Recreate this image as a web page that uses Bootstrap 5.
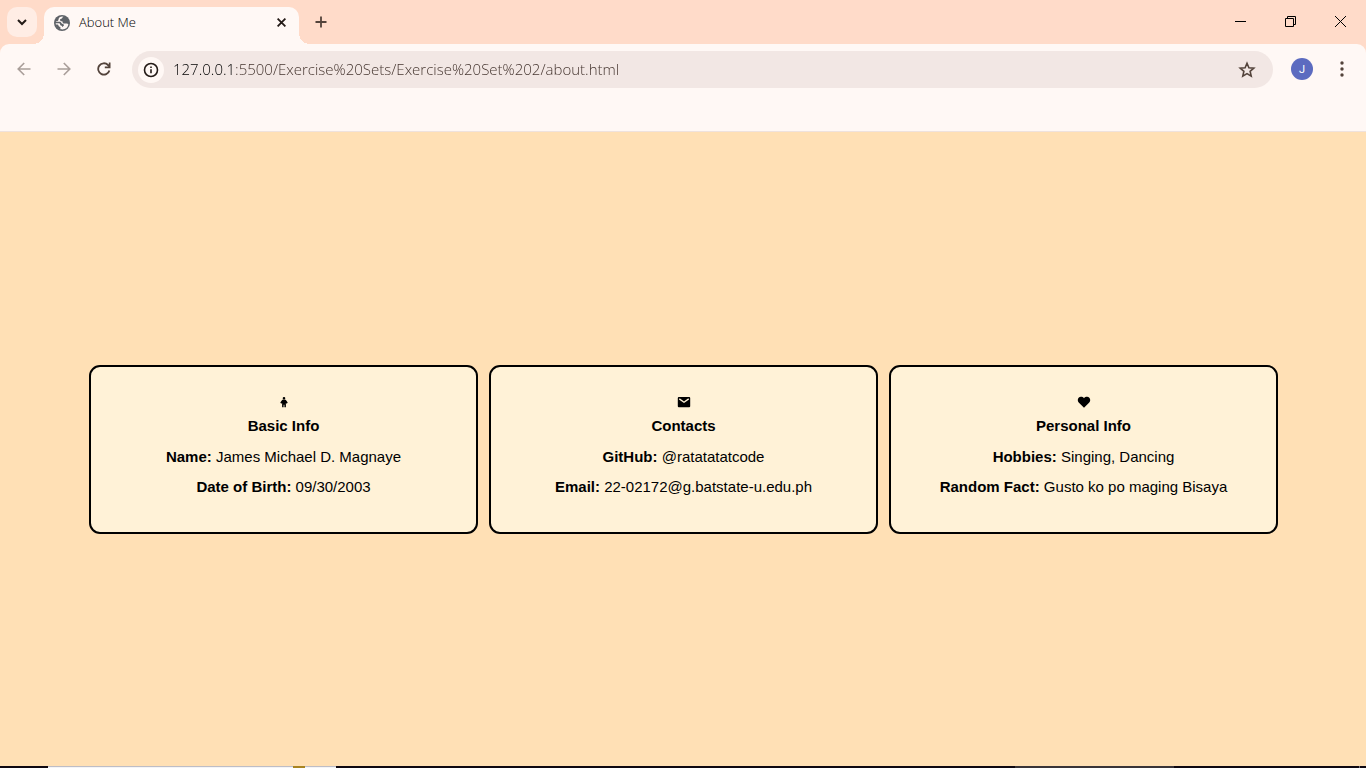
<!DOCTYPE html>
<html lang="en">
<head>
<meta charset="utf-8">
<meta name="viewport" content="width=device-width, initial-scale=1">
<title>About Me</title>
<link href="https://cdn.jsdelivr.net/npm/bootstrap@5.3.0/dist/css/bootstrap.min.css" rel="stylesheet">
<style>
  :root { --frame: #ffdbc9; --bar: #fff8f5; --ink: #231a16; --brown: #53433b; }
  body { background: #ffe0b5; font-family: "Open Sans", sans-serif; color: #000; }
  svg { display: block; }
  button { border: 0; background: none; padding: 0; }
  .tabstrip { background: var(--frame); height: 44px; padding: 7px 0 0 7px; }
  .tab-search { width: 30px; height: 30px; border-radius: 10px; background: #ffede5; margin-right: 7px; }
  .browser-tab { width: 255px; height: 37px; border-radius: 10px 10px 0 0; background: var(--bar); padding: 0 13px 6px 10px; font-size: 13px; font-weight: 300; }
  .browser-tab::before, .browser-tab::after { content: ""; position: absolute; bottom: 0; width: 11px; height: 11px; }
  .browser-tab::before { right: 100%; background: radial-gradient(circle at 0 0, transparent 11px, var(--bar) 11px); }
  .browser-tab::after { left: 100%; background: radial-gradient(circle at 100% 0, transparent 11px, var(--bar) 11px); }
  .tab-title { margin-left: 9px; }
  .new-tab { margin-left: 16px; height: 30px; }
  .win-btn { width: 50px; height: 29px; }
  .toolbar-wrap { background: var(--frame); }
  .toolbar { background: var(--bar); border-radius: 9px 9px 0 0; height: 88px; padding: 7px 14px 0 14px; border-bottom: 1px solid #efe2dd; }
  .nav-btn { width: 20px; height: 36px; }
  .nav-group { gap: 20px; }
  .omnibox { height: 37px; border-radius: 19px; background: #f2e7e4; padding: 0 17px 0 6px; margin-left: 18px; }
  .site-info { width: 26px; height: 26px; border-radius: 50%; background: var(--bar); }
  .url { border: 0; outline: 0; padding: 0; margin-left: 9px; font-size: 15px; font-weight: 300; color: transparent; background: linear-gradient(90deg, #000 59px, #40302a 59px); -webkit-background-clip: text; background-clip: text; }
  .avatar { width: 22px; height: 22px; border-radius: 50%; background: #5c6bc0; color: #fff; font: 11px Roboto, sans-serif; margin: 7px 0 0 18px; }
  .menu-btn { width: 20px; height: 36px; margin-left: 19px; }
  .page { padding: 0 88px 0 89px; font-family: "Liberation Sans", Arial, sans-serif; font-size: 15px; line-height: 20px; }
  .cards { gap: 11px; }
  .info-card { flex: 1 1 0; min-width: 0; min-height: 169px; border: 2px solid #000; border-radius: 11px; background: #fff2d7; padding: 28px 10px 20px; }
  .info-card h2 { font-size: 15px; font-weight: 700; line-height: 20px; margin: 7px 0 11px; }
  .info-card p { margin: 0 0 10px; }
  .taskbar { height: 2px; background: #0e0811; }
  .task-search { width: 288px; margin-left: 48px; background: #f4f4f6; border-top: 1px solid #bdbdc6; }
  .task-dot { width: 12px; height: 2px; background: #a88420; margin: -1px 0 0 245px; }
  .task-active { width: 159px; background: #393438; margin-right: 185px; }
  .task-edge { width: 1px; background: #77727a; margin-right: 6px; }
</style>
</head>
<body class="d-flex flex-column min-vh-100">
<header>
  <div class="tabstrip d-flex">
    <button class="tab-search d-flex align-items-center justify-content-center" aria-label="Search tabs">
      <svg width="10" height="8" viewBox="0 0 10 8" fill="none" stroke="#231a16" stroke-width="2"><path d="M1 2l4 4 4-4"/></svg>
    </button>
    <div class="browser-tab position-relative d-flex align-items-center">
      <svg width="16" height="16" viewBox="0 0 16 16"><circle cx="8" cy="8" r="8" fill="#5f6368"/><path fill="#fff8f5" d="M9.600 1.800C8.300 2.200 8.600 3 7.800 3.500 7.200 3.900 6 3.900 6 4.800s.5 1.500 1.500 1.500c.9 0 1.200.3 1.200 1.200 0 .7.600 1.100 1.300 1.100h2.700c.8 0 1.300.4 1.700.9A6.400 6.400 0 0 1 8 14.400v-1.900c0-.8 1-.9 1.600-1.500.7-.8.2-1.800-.8-2-.8-.2-1.300-.5-1.600-1.200C6.900 7 6.300 6.700 5.400 6.700H1.800A6.300 6.300 0 0 1 9.600 1.800z"/><path fill="#fff8f5" d="M1.700 8.300h3c1 0 1.200.5 1.400 1.200.3.900.8 1.200 1.900 1.300v3.500c-3.500 0-6.300-2.600-6.300-6z"/><path fill="#5f6368" d="M1 9.400h2.600c.5 0 .7.300.8.900.2 1 .9 1.500 2 1.800v2.700L3 13zM1 6.300l.8-3L5 1l3 .3C5.300 2 4.700 3.200 4.500 4.400 4.300 5.300 3.900 6 3 6.300z"/></svg>
      <span class="tab-title me-auto">About Me</span>
      <button aria-label="Close tab"><svg width="9" height="9" viewBox="0 0 9 9" stroke="#231a16" stroke-width="1.800"><path d="M.6.6l7.800 7.800M8.400.6L.6 8.400"/></svg></button>
    </div>
    <button class="new-tab d-flex align-items-center" aria-label="New tab"><svg width="12" height="12" viewBox="0 0 12 12" stroke="#53433b" stroke-width="1.800"><path d="M6 .5v11M.5 6h11"/></svg></button>
    <div class="d-flex ms-auto">
      <button class="win-btn d-flex align-items-center justify-content-center" aria-label="Minimize"><svg width="12" height="11" viewBox="0 0 12 11" stroke="#000"><path d="M0 5.500h11"/></svg></button>
      <button class="win-btn d-flex align-items-center justify-content-center" aria-label="Restore"><svg width="12" height="11" viewBox="0 0 12 11" fill="none" stroke="#000"><path d="M.5 2.500h8v8h-8zM2.500 2.500v-2h8v8h-2"/></svg></button>
      <button class="win-btn d-flex align-items-center justify-content-center" aria-label="Close window"><svg width="12" height="11" viewBox="0 0 12 11" stroke="#000"><path d="M0 0l11 11M11 0L0 11"/></svg></button>
    </div>
  </div>
  <div class="toolbar-wrap">
    <div class="toolbar d-flex align-items-start">
      <div class="nav-group d-flex">
        <button class="nav-btn d-flex align-items-center justify-content-center" aria-label="Back"><svg width="14" height="14" viewBox="0 0 14 14" fill="none" stroke="#a99e99" stroke-width="1.600"><path d="M13.500 7H1.500M7.200 1L1.200 7l6 6"/></svg></button>
        <button class="nav-btn d-flex align-items-center justify-content-center" aria-label="Forward"><svg width="14" height="14" viewBox="0 0 14 14" fill="none" stroke="#a99e99" stroke-width="1.600"><path d="M.5 7h12M6.800 1l6 6-6 6"/></svg></button>
        <button class="nav-btn d-flex align-items-center justify-content-center" aria-label="Reload"><svg width="14" height="14" viewBox="0 0 14 14" fill="none" stroke="#53433b" stroke-width="1.800"><path d="M12.400 8.500A5.700 5.700 0 1 1 11 3l1.500 1.500"/><path fill="#53433b" stroke="none" d="M13.500.5v5.700H7.800V4.500h4V.5z"/></svg></button>
      </div>
      <div class="omnibox d-flex align-items-center flex-grow-1">
        <button class="site-info d-flex align-items-center justify-content-center" aria-label="View site information"><svg width="16" height="16" viewBox="0 0 16 16"><circle cx="8" cy="8" r="6.500" fill="none" stroke="#231a16" stroke-width="1.600"/><path stroke="#231a16" stroke-width="1.600" d="M8 7.200v4M8 4.400V6"/></svg></button>
        <input class="url flex-grow-1" type="text" aria-label="Address" value="127.0.0.1:5500/Exercise%20Sets/Exercise%20Set%202/about.html">
        <button aria-label="Bookmark this tab"><svg width="18" height="18" viewBox="0 0 18 18" fill="none" stroke="#53433b" stroke-width="1.600"><path d="M9 2.200l1.900 4.500 4.900.4-3.700 3.200 1.100 4.800L9 12.600l-4.200 2.500 1.100-4.800-3.700-3.200 4.900-.4z"/></svg></button>
      </div>
      <button class="avatar d-flex align-items-center justify-content-center" aria-label="Profile">J</button>
      <button class="menu-btn d-flex align-items-center justify-content-center" aria-label="Menu"><svg width="4" height="16" viewBox="0 0 4 16" fill="#53433b"><circle cx="2" cy="2" r="1.700"/><circle cx="2" cy="8" r="1.700"/><circle cx="2" cy="14" r="1.700"/></svg></button>
    </div>
  </div>
</header>
<main class="page flex-grow-1 d-flex align-items-center">
  <div class="cards d-flex w-100 text-center">
    <section class="info-card">
      <svg class="mx-auto" width="14" height="14" viewBox="0 0 14 14"><path d="M7 2a1.300 1.300 0 1 1 0 2.600A1.300 1.300 0 0 1 7 2zM5.300 4.800h3.400l2 2.800-.9 1.200-.9-.8v4.200H7.400V9.800h-.8v2.400H5.100V8l-.9.800-.9-1.200z"/></svg>
      <h2>Basic Info</h2>
      <p><strong>Name:</strong> James Michael D. Magnaye</p>
      <p><strong>Date of Birth:</strong> 09/30/2003</p>
    </section>
    <section class="info-card">
      <svg class="mx-auto" width="14" height="14" viewBox="0 0 14 14"><rect x=".8" y="2" width="12.400" height="10.300" rx="1"/><path d="M2.300 3.900L7 7.300l4.700-3.400" fill="none" stroke="#fff2d7" stroke-width="1.300"/></svg>
      <h2>Contacts</h2>
      <p><strong>GitHub:</strong> @ratatatatcode</p>
      <p><strong>Email:</strong> 22-02172@g.batstate-u.edu.ph</p>
    </section>
    <section class="info-card">
      <svg class="mx-auto" width="14" height="14" viewBox="0 0 14 14"><path d="M7 12.700L2.200 8C1.100 6.900.8 6 .8 5c0-1.900 1.300-3.200 3.100-3.200 1.200 0 2.400.5 3.100 1.400.7-.9 1.900-1.400 3.100-1.400 1.800 0 3.100 1.300 3.100 3.200 0 1-.3 1.900-1.400 3z"/></svg>
      <h2>Personal Info</h2>
      <p><strong>Hobbies:</strong> Singing, Dancing</p>
      <p><strong>Random Fact:</strong> Gusto ko po maging Bisaya</p>
    </section>
  </div>
</main>
<footer class="taskbar d-flex">
  <div class="task-search"><div class="task-dot"></div></div>
  <div class="task-active ms-auto"></div>
  <div class="task-edge"></div>
</footer>
<script src="https://cdn.jsdelivr.net/npm/bootstrap@5.3.0/dist/js/bootstrap.bundle.min.js"></script>
</body>
</html>
